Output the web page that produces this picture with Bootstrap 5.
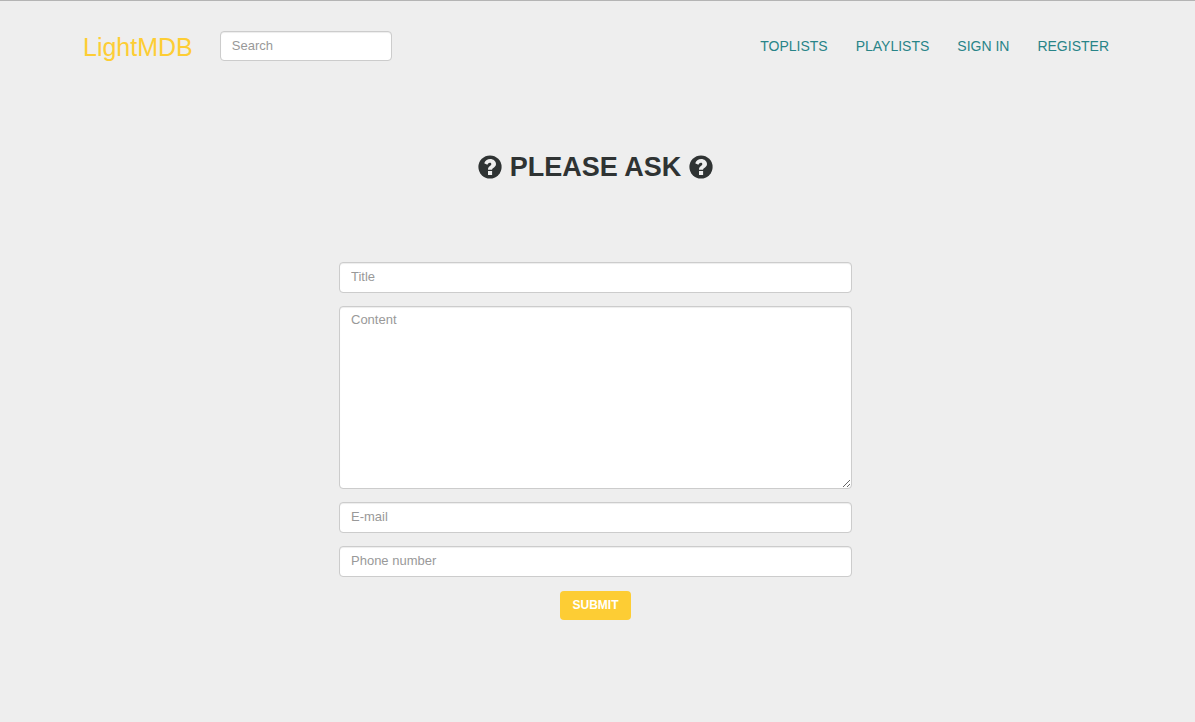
<!DOCTYPE html>
<html lang="en">
<head>
<meta charset="utf-8">
<meta name="viewport" content="width=device-width, initial-scale=1">
<title>LightMDB</title>
<link href="https://cdn.jsdelivr.net/npm/bootstrap@5.3.0/dist/css/bootstrap.min.css" rel="stylesheet">
<style>
  body { background: #eee; color: #333; font: 13px/18px "Liberation Sans", Arial, sans-serif; border-top: 1px solid #b4b4b4; min-height: 100vh; }
  .page-width { max-width: 1053px; }
  .site-nav { padding: 29px 13px 0 14px; }
  .site-nav .navbar-brand { color: #fdcd34; font-size: 25px; line-height: 34px; padding: 0; margin-right: 27px; }
  .site-nav .navbar-nav { gap: 28px; }
  .site-nav .navbar-nav .nav-link { color: #288488; font-size: 14px; padding: 5px 0 7px; text-transform: uppercase; }
  .search-form { width: 172px; padding-bottom: 2px; }
  .form-control, .form-control:focus { color: #555; border-color: #ccc; }
  .form-control { font-size: 13px; line-height: 18px; padding: 5px 11px 6px; border-radius: 4px; box-shadow: inset 0 1px 1px rgba(0,0,0,.075); }
  .form-control::placeholder { color: #999; }
  .search-form .form-control { padding-bottom: 5px; }
  textarea.form-control { height: 183px; padding-top: 4px; resize: vertical; }
  .page-title { font-size: 27px; line-height: 30px; font-weight: 700; color: #2f3333; margin: 88px 0 80px; gap: 8px; }
  .page-title svg { width: 24px; height: 24px; }
  .ask-form { max-width: 513px; gap: 13px; }
  .btn-submit, .btn-submit:hover { background: #fdcd34; color: #fff; }
  .btn-submit { font-size: 12px; font-weight: 700; line-height: 17px; min-width: 71px; padding: 5px 11px; border-radius: 4px; margin-top: 1px; }
</style>
</head>
<body>
<div class="pe-1">
  <div class="page-width mx-auto">
    <nav class="navbar navbar-expand site-nav">
      <a class="navbar-brand" href="#">LightMDB</a>
      <form class="search-form" role="search">
        <input class="form-control" type="search" placeholder="Search" aria-label="Search">
      </form>
      <ul class="navbar-nav ms-auto">
        <li class="nav-item"><a class="nav-link" href="#">Toplists</a></li>
        <li class="nav-item"><a class="nav-link" href="#">Playlists</a></li>
        <li class="nav-item"><a class="nav-link" href="#">Sign in</a></li>
        <li class="nav-item"><a class="nav-link" href="#">Register</a></li>
      </ul>
    </nav>
    <main>
      <h1 class="page-title d-flex justify-content-center align-items-center">
        <svg viewBox="0 0 24 24" aria-hidden="true"><circle cx="12" cy="12" r="11.6" fill="#2f3333"/><path id="question" fill="#eee" d="M6.200 8.200C7.500 5.400 9.500 4 12.200 4c3.200 0 5.800 2.200 5.800 5 0 3.500-3.900 3.800-3.900 5.500v.3H10v-.6c0-2.900 3.300-3.300 3.300-5 0-.9-.6-1.400-1.500-1.400-1.100 0-1.700.8-2.500 1.900zM10 16h4.100v4H10z"/></svg>
        <span>PLEASE ASK</span>
        <svg viewBox="0 0 24 24" aria-hidden="true"><circle cx="12" cy="12" r="11.6" fill="#2f3333"/><use href="#question"/></svg>
      </h1>
      <form class="ask-form d-flex flex-column mx-auto">
        <input class="form-control" type="text" placeholder="Title" aria-label="Title">
        <textarea class="form-control" placeholder="Content" aria-label="Content"></textarea>
        <input class="form-control" type="email" placeholder="E-mail" aria-label="E-mail">
        <input class="form-control" type="tel" placeholder="Phone number" aria-label="Phone number">
        <button class="btn btn-submit align-self-center" type="submit">SUBMIT</button>
      </form>
    </main>
  </div>
</div>
<script src="https://cdn.jsdelivr.net/npm/bootstrap@5.3.0/dist/js/bootstrap.bundle.min.js"></script>
</body>
</html>
